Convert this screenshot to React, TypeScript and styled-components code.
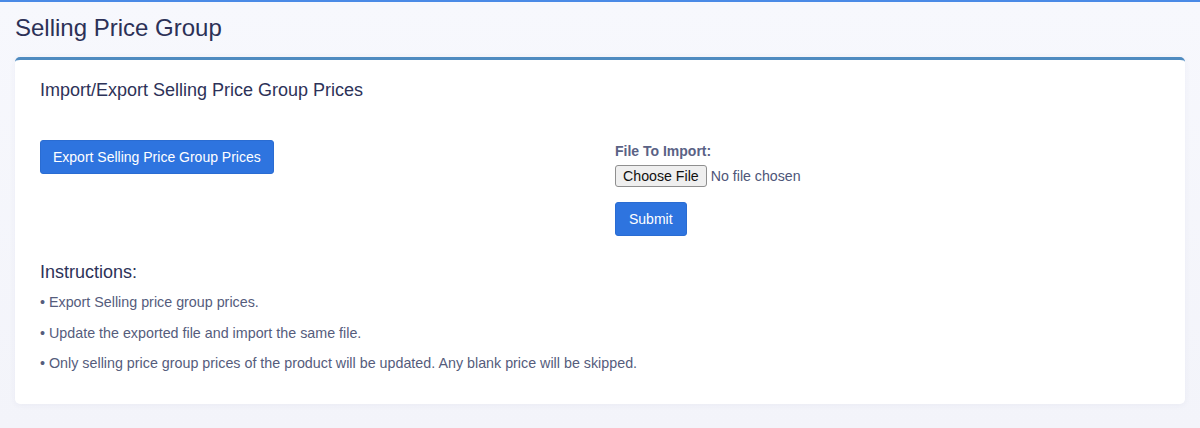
import React from "react";
import styled, { createGlobalStyle } from "styled-components";

const Global = createGlobalStyle`
  html, body { margin: 0; padding: 0; }
  body {
    background: #f5f6fb;
    font-family: "Liberation Sans", Arial, Helvetica, sans-serif;
    color: #2d3258;
    border-top: 2px solid #4a8ae6;
    min-height: 426px;
  }
`;

const Page = styled.div`
  padding: 0 15px 24px;
  background: linear-gradient(#f7f8fd, #f3f4fa);
`;

const PageHeader = styled.header`
  padding: 13px 0 16px;
`;

const Title = styled.h1`
  margin: 0;
  font-size: 24px;
  font-weight: 400;
  line-height: 1.1;
  color: #2c3157;
`;

const Card = styled.section`
  background: #ffffff;
  border-top: 3px solid #4f8bc0;
  border-radius: 5px;
  box-shadow: 0 1px 6px rgba(60, 70, 120, 0.06);
`;

const CardHeader = styled.div`
  padding: 20px 25px 0;
`;

const CardTitle = styled.h3`
  margin: 0;
  font-size: 18px;
  font-weight: 400;
  line-height: 20px;
  color: #2d3258;
`;

const CardBody = styled.div`
  padding: 40px 25px 31px;
`;

const Columns = styled.div`
  display: grid;
  grid-template-columns: 1fr 1fr;
  column-gap: 30px;
`;

const Column = styled.div`
  display: flex;
  flex-direction: column;
  align-items: flex-start;
`;

const Button = styled.button<{ $wide?: boolean }>`
  font-family: "Liberation Sans", Arial, sans-serif;
  font-size: 14px;
  line-height: 20px;
  color: #ffffff;
  background: #2e74df;
  border: 1px solid #2a6cd2;
  border-radius: 3px;
  padding: 6px ${(p) => (p.$wide ? "13px" : "12px")};
  cursor: pointer;
`;

const Label = styled.label`
  margin-top: 1px;
  font-size: 14px;
  font-weight: 700;
  line-height: 20px;
  color: #5a6285;
`;

const FileInput = styled.input`
  margin-top: 4px;
  font-family: "Liberation Sans", Arial, sans-serif;
  font-size: 14.2px;
  color: #4e5679;
  &::file-selector-button {
    font-family: "Liberation Sans", Arial, sans-serif;
    font-size: 14.2px;
    color: #111;
    background: #efefef;
    border: 1px solid #8f8f8f;
    border-radius: 3px;
    padding: 2px 7px;
    margin-right: 4px;
  }
`;

const SubmitRow = styled.div`
  margin-top: 15px;
`;

const Instructions = styled.div`
  margin-top: 26px;
`;

const Heading = styled.h4`
  margin: 0 0 10px;
  font-size: 18px;
  font-weight: 400;
  line-height: 20px;
  color: #2d3258;
`;

const Bullet = styled.p`
  margin: 0 0 10.5px;
  font-size: 14.3px;
  line-height: 20px;
  color: #555c7c;
  &:last-child { margin-bottom: 0; }
`;

const bullets = [
  "Export Selling price group prices.",
  "Update the exported file and import the same file.",
  "Only selling price group prices of the product will be updated. Any blank price will be skipped.",
];

export default function App() {
  return (
    <>
      <Global />
      <Page>
        <PageHeader>
          <Title>Selling Price Group</Title>
        </PageHeader>
        <Card>
          <CardHeader>
            <CardTitle>Import/Export Selling Price Group Prices</CardTitle>
          </CardHeader>
          <CardBody>
            <Columns>
              <Column>
                <Button type="button">Export Selling Price Group Prices</Button>
              </Column>
              <Column>
                <Label htmlFor="file">File To Import:</Label>
                <FileInput id="file" type="file" />
                <SubmitRow>
                  <Button type="submit" $wide>
                    Submit
                  </Button>
                </SubmitRow>
              </Column>
            </Columns>
            <Instructions>
              <Heading>Instructions:</Heading>
              {bullets.map((b) => (
                <Bullet key={b}>• {b}</Bullet>
              ))}
            </Instructions>
          </CardBody>
        </Card>
      </Page>
    </>
  );
}
